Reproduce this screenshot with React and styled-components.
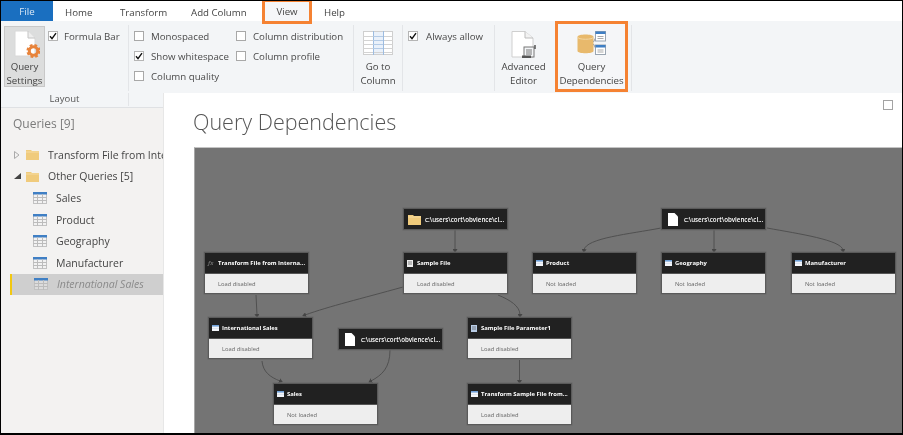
import React from "react";
import styled, { createGlobalStyle } from "styled-components";

const Global = createGlobalStyle`
  html, body { margin: 0; padding: 0; background: #fff; }
  * { box-sizing: border-box; }
  body { font-family: "Open Sans", "Noto Sans", "Liberation Sans", sans-serif; }
`;

const Frame = styled.div`
  width: 903px;
  height: 435px;
  border-style: solid;
  border-color: #000;
  border-width: 1px 1px 2px 1px;
  display: flex;
  flex-direction: column;
  overflow: hidden;
  background: #fff;
  color: #3b3b3b;
`;

const TabBar = styled.div`
  height: 20px;
  display: flex;
  align-items: stretch;
  flex: none;
  position: relative;
  z-index: 2;
  filter: blur(0.3px);
`;
const FileTab = styled.div`
  width: 52px;
  margin-right: 12px;
  background: #1a6fc0;
  color: #dbe9f6;
  font-size: 9.7px;
  display: flex;
  align-items: center;
  justify-content: center;
`;
const Tab = styled.div`
  width: ${(p) => p.$w}px;
  font-size: 9.7px;
  line-height: 23px;
  white-space: nowrap;
  color: #444;
`;
const ActiveTab = styled(Tab)`
  height: 23px;
  margin-right: 12px;
  text-align: center;
  line-height: 20px;
  border: 3px solid #f58232;
  border-top-width: 1.5px;
  background: #f5f6f8;
`;

const Ribbon = styled.div`
  height: 72px;
  flex: none;
  display: flex;
  background: #f3f5f7;
  font-size: 9.7px;
  filter: blur(0.3px);
`;
const Group = styled.div`
  width: ${(p) => p.$w}px;
  flex: none;
  margin: 4px 0 2px;
  border-right: ${(p) => (p.$plain ? "none" : "1px solid #e3e5e8")};
  display: flex;
  padding-left: ${(p) => p.$pad || 0}px;
`;
const StackGroup = styled(Group)`
  flex-direction: column;
  align-items: center;
  padding-top: 6px;
  padding-right: ${(p) => p.$right || 0}px;
  svg { flex: none; }
`;
const BigLabel = styled.div`
  text-align: center;
  line-height: 14px;
  margin-top: ${(p) => p.$mt || 0}px;
  color: #444;
  white-space: nowrap;
  flex: none;
`;
const QueryButton = styled.div`
  width: 41px;
  height: 61px;
  margin-top: 1px;
  background: #dcdddd;
  border: 1px solid #c8c8c8;
  display: flex;
  flex-direction: column;
  align-items: center;
  padding-top: 3px;
  flex: none;
  svg { flex: none; }
`;
const Check = styled.label`
  display: flex;
  align-items: center;
  gap: ${(p) => p.$gap || 7}px;
  height: 20px;
  white-space: nowrap;
  color: #4a4a4a;
`;
const Box = styled.span`
  width: 10px;
  height: 10px;
  flex: none;
  background: #fff;
  border: 1px solid ${(p) => (p.$on ? "#b5b5b5" : "#a8a8a8")};
  display: flex;
  align-items: center;
  justify-content: center;
`;
const CheckColumn = styled.div`
  display: grid;
  grid-template-columns: 102px 110px;
  grid-auto-rows: 20px;
  padding-top: 1px;
`;
const SingleCheck = styled.div`
  padding-top: 1px;
  padding-left: ${(p) => p.$pad || 0}px;
`;
const OrangeBox = styled.div`
  width: 73px;
  height: 71px;
  flex: none;
  border: 3px solid #f58232;
  display: flex;
  flex-direction: column;
  align-items: center;
  padding-top: 7px;
  background: #f5f6f8;
  svg { flex: none; }
`;
const TrailingRule = styled.div`
  width: 1px;
  height: 66px;
  margin: 4px 0 0 3px;
  background: #e3e5e8;
`;

const Main = styled.div`
  flex: 1;
  display: flex;
  min-height: 0;
`;
const Side = styled.aside`
  width: 163px;
  flex: none;
  background: #f3f2f1;
  border-right: 1px solid #e7e7e7;
  display: flex;
  flex-direction: column;
  overflow: hidden;
  filter: blur(0.3px);
`;
const LayoutFooter = styled.div`
  height: 15px;
  flex: none;
  background: #f3f5f7;
  border-bottom: 1px solid #dfe1e4;
  display: flex;
  font-size: 9.5px;
  color: #555;
`;
const LayoutName = styled.div`
  width: 128px;
  height: 13px;
  line-height: 12px;
  text-align: center;
  border-right: 1px solid #e3e5e8;
`;
const QueriesTitle = styled.div`
  margin: 7px 0 11px 12px;
  font-size: 12px;
  line-height: 18px;
  color: #7b7b7b;
`;
const Row = styled.div`
  height: 21.6px;
  display: flex;
  align-items: center;
  white-space: nowrap;
  font-size: 10.5px;
  color: #444;
  padding-left: ${(p) => p.$pad}px;
  svg { flex: none; }
`;
const SelectedRow = styled(Row)`
  margin-left: 9px;
  padding-left: 22px;
  background: #cfcfcf;
  border-left: 2px solid #f2c811;
  color: #8a8a8a;
  font-style: italic;
`;
const RowText = styled.span`
  margin-left: ${(p) => p.$ml}px;
`;
const Spacer = styled.span`
  width: ${(p) => p.$w}px;
  flex: none;
`;

const Content = styled.main`
  flex: 1;
  min-width: 0;
  display: flex;
  flex-direction: column;
  padding-left: 30px;
  position: relative;
`;
const Maximize = styled.div`
  position: absolute;
  right: 9px;
  top: 6.5px;
  width: 10px;
  height: 10px;
  border: 1.5px solid #a3a3a3;
`;
const Title = styled.h1`
  margin: 14px 0 0 -1px;
  height: 40px;
  font-size: 21.5px;
  line-height: 30px;
  font-weight: 300;
  color: #555;
  white-space: nowrap;
  filter: blur(0.25px);
`;
const Canvas = styled.div`
  flex: 1;
  position: relative;
  background: #747474;
  border-top: 1px solid #c4c4c4;
  border-left: 1px solid #a6a6a6;
  overflow: hidden;
`;
const Edges = styled.svg`
  position: absolute;
  left: 0;
  top: 0;
  width: 100%;
  height: 100%;
`;
const Node = styled.div`
  position: absolute;
  left: ${(p) => p.$x - 195}px;
  top: ${(p) => p.$y - 148}px;
  width: 105px;
  border: 1px solid #5a5a5a;
  box-shadow: 0 0 0 0.5px #666;
`;
const NodeHead = styled.div`
  height: 20px;
  background: #212121;
  color: #fff;
  display: flex;
  align-items: center;
  font-size: ${(p) => (p.$source ? 6.2 : 5.9)}px;
  font-weight: ${(p) => (p.$source ? 600 : 700)};
  white-space: nowrap;
  overflow: hidden;
  filter: blur(0.35px);
`;
const IconSlot = styled.span`
  width: ${(p) => p.$w}px;
  padding-left: ${(p) => p.$pad}px;
  flex: none;
  display: flex;
  align-items: center;
`;
const NodeBody = styled.div`
  height: 20px;
  background: #eeeeee;
  color: #666;
  font-size: 5.8px;
  line-height: 20px;
  padding-left: 13px;
  border-top: 1px solid #555;
  filter: blur(0.35px);
`;
const Fx = styled.span`
  color: #6d6d6d;
  font-style: italic;
  font-size: 6px;
`;

const Tick = () => (
  <svg width="8" height="8" viewBox="0 0 8 8">
    <path d="M1 4.3 L3 6.6 L7 1.2" fill="none" stroke="#111" strokeWidth="1.4" />
  </svg>
);
const Option = ({ on, label, gap }) => (
  <Check $gap={gap}>
    <Box $on={on}>{on && <Tick />}</Box>
    {label}
  </Check>
);

const SettingsIcon = () => (
  <svg width="30" height="30" viewBox="0 0 30 30">
    <path d="M5 1 H18 L25 8 V26 H5 Z" fill="#fff" stroke="#d8d8d8" />
    <path d="M18 1 V8 H25" fill="#eee" stroke="#c4c4c4" />
    <circle cx="23.5" cy="21" r="5.8" fill="none" stroke="#e8833a" strokeWidth="2.6" strokeDasharray="2.6 2" />
    <circle cx="23.5" cy="21" r="4.2" fill="none" stroke="#e8833a" strokeWidth="3" />
  </svg>
);
const GridIcon = () => (
  <svg width="30" height="24" viewBox="0 0 30 24">
    <rect x="0.5" y="0.5" width="29" height="23" fill="#fff" stroke="#cfcfcf" />
    <rect x="10" y="1" width="10" height="22" fill="#eaf1fa" />
    {[5, 9, 13, 17, 21].map((y) => (
      <path key={y} d={`M0 ${y + 0.5} H30`} stroke="#d3d3d3" />
    ))}
    <path d="M10.5 0 V24 M20.5 0 V24" stroke="#9dbce0" />
    <path d="M10 5.5 H20 M10 9.5 H20 M10 13.5 H20 M10 17.5 H20" stroke="#b4cbe6" />
  </svg>
);
const EditorIcon = () => (
  <svg width="30" height="29" viewBox="0 1 30 29">
    <path d="M3 1.5 H16 L24 8 V27 H3 Z" fill="#fff" stroke="#cfcfcf" />
    <path d="M16 1.5 V8 H24" fill="#f2f2f2" stroke="#bdbdbd" />
    <rect x="15" y="17" width="10" height="10" fill="#f3f5f7" stroke="#777" />
    <path d="M17 20 H23 M17 22 H23 M17 24 H23" stroke="#777" />
    <rect x="13" y="25.5" width="9" height="2.5" fill="#555" />
    <path d="M26 15 V19" stroke="#555" strokeWidth="1.5" />
  </svg>
);
const DepsIcon = () => (
  <svg width="30" height="24" viewBox="0 0 30 24">
    <path d="M0.5 6 C0.5 2.8 16.5 2.8 16.5 6 V20 C16.5 23 0.5 23 0.5 20 Z" fill="#e8b96c" />
    <path d="M0.5 6 C0.5 9 16.5 9 16.5 6" fill="none" stroke="#f3d7a3" />
    <path d="M16.5 11 L19 6 M16.5 13 L19 18" stroke="#9a9a9a" />
    <rect x="18.5" y="0.5" width="10" height="9.5" fill="#fff" stroke="#9aa5b1" />
    <rect x="18.5" y="0.5" width="10" height="2.5" fill="#3f7fc4" />
    <path d="M20.5 5.5 H26.5 M20.5 7.5 H26.5" stroke="#aaa" />
    <rect x="18.5" y="14" width="10" height="9.5" fill="#fff" stroke="#9aa5b1" />
    <rect x="18.5" y="14" width="10" height="2.5" fill="#3f7fc4" />
    <path d="M20.5 19 H26.5 M20.5 21 H26.5" stroke="#aaa" />
  </svg>
);
const FolderIcon = () => (
  <svg width="13" height="11" viewBox="0 0 13 11">
    <path d="M0 1 H5 L6 2 H13 V11 H0 Z" fill="#f0cb7c" />
    <path d="M0 3 H13" stroke="#f6dca3" />
  </svg>
);
const TableIcon = ({ dim }) => (
  <svg width="14" height="12" viewBox="0 0 14 12">
    <rect x="0.5" y="0.5" width="13" height="11" fill={dim ? "#dcdcdc" : "#f2f2f2"} stroke="#c2c2c2" />
    <rect x="0" y="0" width="14" height="2.5" fill="#3f7fc4" />
    <path d="M0 5.5 H14 M0 8.5 H14 M4.5 2 V12 M9.5 2 V12" stroke="#bcbcbc" />
  </svg>
);
const MiniTable = () => (
  <svg width="7" height="6" viewBox="0 0 7 6">
    <rect width="7" height="6" fill="#f4f6fa" />
    <rect width="7" height="1.6" fill="#6fa0d8" />
    <path d="M0 3.5 H7" stroke="#cfd8e6" strokeWidth="0.6" />
  </svg>
);
const MiniDoc = ({ tint }) => (
  <svg width="6" height="7" viewBox="0 0 6 7">
    <rect width="6" height="7" fill={tint || "#eee"} />
    <path d="M1 2 H5 M1 4 H5" stroke="#555" strokeWidth="0.7" />
  </svg>
);
const PageIcon = () => (
  <svg width="10" height="13" viewBox="0 0 10 13">
    <path d="M0 0 H6.5 L10 3.5 V13 H0 Z" fill="#fff" />
  </svg>
);

const cards = [
  { x: 204, y: 252, t: "Transform File from Interna...", b: "Load disabled", i: <Fx>fx</Fx> },
  { x: 403, y: 252, t: "Sample File", b: "Load disabled", i: <MiniDoc /> },
  { x: 532, y: 252, t: "Product", b: "Not loaded", i: <MiniTable /> },
  { x: 661, y: 252, t: "Geography", b: "Not loaded", i: <MiniTable /> },
  { x: 791, y: 252, t: "Manufacturer", b: "Not loaded", i: <MiniTable /> },
  { x: 208, y: 317, t: "International Sales", b: "Load disabled", i: <MiniTable /> },
  { x: 467, y: 317, t: "Sample File Parameter1", b: "Load disabled", i: <MiniDoc tint="#b9cde6" /> },
  { x: 273, y: 383, t: "Sales", b: "Not loaded", i: <MiniTable /> },
  { x: 467, y: 383, t: "Transform Sample File from...", b: "Load disabled", i: <MiniTable /> },
];
const sources = [
  { x: 403, y: 208, icon: <FolderIcon />, pad: 4, w: 21 },
  { x: 661, y: 208, icon: <PageIcon />, pad: 6, w: 22 },
  { x: 338, y: 328, icon: <PageIcon />, pad: 6, w: 22 },
];
const edges = [
  "M455 230 L455 250",
  "M256 295 L257 315",
  "M403 287 C360 299 330 306 305 315",
  "M498 295 C510 300 520 306 520 315",
  "M262 361 C263 372 270 377 280 381",
  "M390 350 C390 368 382 375 371 381",
  "M519.5 360 L519.5 381",
  "M661 228 C630 234 586 238 584 250",
  "M714 230 L714 250",
  "M767 228 C800 234 841 240 843 250",
];

export default function App() {
  return (
    <>
      <Global />
      <Frame>
        <TabBar>
          <FileTab>File</FileTab>
          <Tab $w={55}>Home</Tab>
          <Tab $w={71}>Transform</Tab>
          <Tab $w={71}>Add Column</Tab>
          <ActiveTab $w={50}>View</ActiveTab>
          <Tab $w={40}>Help</Tab>
        </TabBar>
        <Ribbon>
          <Group $w={128} $pad={3}>
            <QueryButton>
              <SettingsIcon />
              <BigLabel>Query</BigLabel>
              <BigLabel>Settings</BigLabel>
            </QueryButton>
            <SingleCheck $pad={3}>
              <Option on gap={6} label="Formula Bar" />
            </SingleCheck>
          </Group>
          <Group $w={225} $pad={5}>
            <CheckColumn>
              <Option label="Monospaced" />
              <Option label="Column distribution" />
              <Option on label="Show whitespace" />
              <Option label="Column profile" />
              <Option label="Column quality" />
            </CheckColumn>
          </Group>
          <StackGroup $w={49}>
            <GridIcon />
            <BigLabel $mt={5}>Go to</BigLabel>
            <BigLabel>Column</BigLabel>
          </StackGroup>
          <Group $w={92} $pad={5}>
            <SingleCheck>
              <Option on gap={8} label="Always allow" />
            </SingleCheck>
          </Group>
          <StackGroup $w={60} $right={3} $plain>
            <EditorIcon />
            <BigLabel>Advanced</BigLabel>
            <BigLabel>Editor</BigLabel>
          </StackGroup>
          <OrangeBox>
            <DepsIcon />
            <BigLabel $mt={5}>Query</BigLabel>
            <BigLabel>Dependencies</BigLabel>
          </OrangeBox>
          <TrailingRule />
        </Ribbon>
        <Main>
          <Side>
            <LayoutFooter>
              <LayoutName>Layout</LayoutName>
            </LayoutFooter>
            <QueriesTitle>Queries [9]</QueriesTitle>
            <Row $pad={13}>
              <svg width="6" height="8" viewBox="0 0 6 8">
                <path d="M0.5 0.5 L5 4 L0.5 7.5 Z" fill="none" stroke="#aaa" />
              </svg>
              <Spacer $w={6} />
              <FolderIcon />
              <RowText $ml={9}>Transform File from International Sales</RowText>
            </Row>
            <Row $pad={13}>
              <svg width="7" height="6" viewBox="0 0 7 6">
                <path d="M7 0 V6 H0 Z" fill="#444" />
              </svg>
              <Spacer $w={5} />
              <FolderIcon />
              <RowText $ml={9}>Other Queries [5]</RowText>
            </Row>
            {["Sales", "Product", "Geography", "Manufacturer"].map((n) => (
              <Row key={n} $pad={32}>
                <TableIcon />
                <RowText $ml={9}>{n}</RowText>
              </Row>
            ))}
            <SelectedRow $pad={22}>
              <TableIcon dim />
              <RowText $ml={9}>International Sales</RowText>
            </SelectedRow>
          </Side>
          <Content>
            <Maximize />
            <Title>Query Dependencies</Title>
            <Canvas>
              <Edges viewBox="195 148 707 285" preserveAspectRatio="xMinYMin slice">
                <defs>
                  <marker id="head" markerWidth="5" markerHeight="5" refX="1" refY="2.5" orient="auto" markerUnits="userSpaceOnUse">
                    <path d="M0 0 L4 2.5 L0 5 Z" fill="#454545" />
                  </marker>
                </defs>
                {edges.map((d) => (
                  <path key={d} d={d} fill="none" stroke="#4c4c4c" strokeWidth="0.9" markerEnd="url(#head)" />
                ))}
              </Edges>
              {sources.map((s) => (
                <Node key={s.x + "-" + s.y} $x={s.x} $y={s.y}>
                  <NodeHead $source>
                    <IconSlot $w={s.w} $pad={s.pad}>{s.icon}</IconSlot>
                    c:\users\cort\obvience\cl...
                  </NodeHead>
                </Node>
              ))}
              {cards.map((c) => (
                <Node key={c.t} $x={c.x} $y={c.y}>
                  <NodeHead>
                    <IconSlot $w={13} $pad={3}>{c.i}</IconSlot>
                    {c.t}
                  </NodeHead>
                  <NodeBody>{c.b}</NodeBody>
                </Node>
              ))}
            </Canvas>
          </Content>
        </Main>
      </Frame>
    </>
  );
}
